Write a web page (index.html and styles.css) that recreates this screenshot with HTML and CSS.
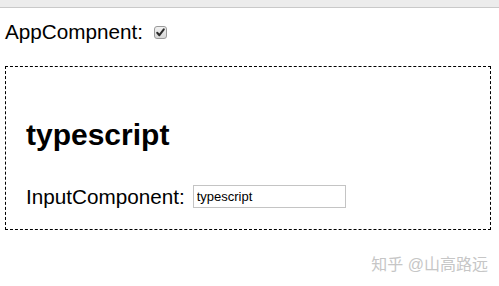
FILE: index.html
```html
<!DOCTYPE html>
<html lang="en">
  <head>
    <meta charset="UTF-8" />
    <meta name="viewport" content="width=device-width, initial-scale=1.0" />
    <title>AppCompnent</title>
    <link rel="stylesheet" href="styles.css">
  </head>
  <body>
    <div class="topbar"></div>

    <div class="app">
      <div class="app-row">
        <span>AppCompnent:</span>
        <svg class="check" width="13" height="13" viewBox="0 0 13 13">
          <defs>
            <linearGradient id="boxFill" x1="0" y1="0" x2="0" y2="1">
              <stop offset="0" stop-color="#f2f2f2" />
              <stop offset="1" stop-color="#d6d6d6" />
            </linearGradient>
          </defs>
          <rect x="0.5" y="0.5" width="12" height="12" rx="2.5" fill="url(#boxFill)" stroke="#9a9a9a" />
          <path d="M3.2 6.8 L5.4 9.2 L9.8 3.4" fill="none" stroke="#2b2b2b" stroke-width="2" stroke-linecap="round" stroke-linejoin="round" />
        </svg>
      </div>

      <div class="child">
        <h1>typescript</h1>
        <div class="input-row">
          <span>InputComponent:</span>
          <input type="text" value="typescript" />
        </div>
      </div>
    </div>

    <div class="watermark">知乎 @山高路远</div>
  </body>
</html>
```

FILE: styles.css
```css
body {
  font-family: "Liberation Sans", Arial, sans-serif;
  margin: 0;
  padding: 0;
  background-color: #fff;
  color: #000;
}

.topbar {
  height: 7px;
  background-color: #ececec;
  border-bottom: 1px solid #c9c9c9;
}

.app {
  padding: 0 8px 0 5px;
}

.app-row {
  display: flex;
  align-items: center;
  height: 24px;
  margin-top: 12px;
  font-size: 20.7px;
}

.check {
  margin-left: 11px;
  margin-top: 1px;
}

.child {
  margin-top: 22px;
  border: 1px dashed #000;
  padding: 0 20px 21px;
}

h1 {
  margin: 50px 0 0;
  font-size: 30px;
  line-height: 36px;
  font-weight: bold;
}

.input-row {
  display: flex;
  align-items: center;
  height: 23px;
  margin-top: 32px;
  font-size: 20.7px;
}

.input-row input {
  margin-left: 8px;
  width: 153px;
  height: 23px;
  box-sizing: border-box;
  border: 1px solid #c4c4c4;
  padding: 0 3px;
  font-family: "Liberation Sans", Arial, sans-serif;
  font-size: 13px;
  color: #000;
  outline: none;
}

.watermark {
  position: absolute;
  right: 11px;
  top: 255px;
  font-family: "Liberation Sans", "Noto Sans CJK SC", sans-serif;
  font-size: 16px;
  line-height: 20px;
  color: #c6c6c6;
}
```
